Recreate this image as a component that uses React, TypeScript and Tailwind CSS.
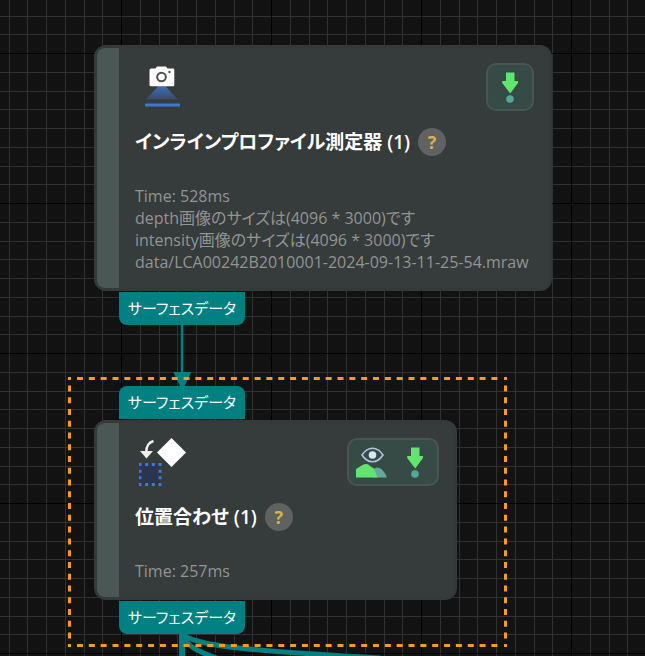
import type { ReactNode } from 'react'

const GRID_STEPS = [19, 38, 56, 75, 94, 113, 131]

function Grid() {
  return (
    <svg className="absolute inset-0 h-full w-full" shapeRendering="crispEdges" aria-hidden="true">
      <defs>
        <pattern id="grid" x="121" y="53" width="150" height="150" patternUnits="userSpaceOnUse">
          {GRID_STEPS.map((s) => (
            <g key={s} fill="#313131">
              <rect x={s} y="0" width="1" height="150" />
              <rect x="0" y={s} width="150" height="1" />
            </g>
          ))}
          <rect width="1" height="150" fill="#000" />
          <rect width="150" height="1" fill="#000" />
        </pattern>
      </defs>
      <rect width="100%" height="100%" fill="url(#grid)" />
    </svg>
  )
}

function Edges() {
  return (
    <svg className="absolute inset-0 h-full w-full" fill="none" stroke="#008080" aria-hidden="true">
      <path d="M182 324V376" strokeWidth="2.5" />
      <path d="M174 372.5H190.5L184 386H180.5Z" fill="#008080" strokeLinejoin="round" strokeWidth="1" />
      <path d="M182 634V660" strokeWidth="6" />
      <path d="M182 634C196 646 240 650 380 658" strokeWidth="5" />
      <path d="M182 634C186 646 198 652 222 660" strokeWidth="5" />
    </svg>
  )
}

function Selection() {
  return (
    <svg className="pointer-events-none absolute inset-0 h-full w-full" stroke="#f99b1c" strokeWidth="3" aria-hidden="true">
      <path d="M77 378.5H498M77 645.5H498" strokeDasharray="6 5.84" />
      <path d="M69.5 385.5V639M505.5 385.5V639" strokeDasharray="6 5.76" />
      <path d="M68 378.5h3M504 378.5h3M68 645.5h3M504 645.5h3" />
    </svg>
  )
}

function CameraIcon() {
  return (
    <svg width="36" height="44" viewBox="0 -3 36 44" aria-hidden="true">
      <defs>
        <linearGradient id="beam" x1="0" y1="0" x2="0" y2="1">
          <stop offset="0" stopColor="#3f6db8" />
          <stop offset="1" stopColor="#3a4a66" />
        </linearGradient>
      </defs>
      <path d="M13.5 20h7l12 13.5H1Z" fill="url(#beam)" />
      <path d="M6 2.5h4.500L12 .5h9l1.5 2H28a1.3 1.3 0 0 1 1.3 1.3V19a1.3 1.3 0 0 1-1.3 1.3H5.800A1.3 1.3 0 0 1 4.500 19V3.500Z" fill="#fff" />
      <circle cx="16.500" cy="11" r="4.3" fill="none" stroke="#4a4f4f" strokeWidth="2" />
      <circle cx="24.500" cy="6" r="1.2" fill="#4a4f4f" />
      <rect x="0" y="37.5" width="35" height="3" rx="1" fill="#3f78dc" />
    </svg>
  )
}

function AlignIcon() {
  return (
    <svg width="48" height="50" viewBox="4 0 48 50" aria-hidden="true">
      <path d="M36.5 0 51 14.5 36.5 29 22 14.5Z" fill="#fff" />
      <path d="M18.5 3C13 5 11.3 8 11.3 14" fill="none" stroke="#eee" strokeWidth="2.5" />
      <path d="M5 13h13L11.5 20.5Z" fill="#eee" />
      <rect
        x="5"
        y="26.5"
        width="20"
        height="20"
        fill="#2b3550"
        stroke="#4377dd"
        strokeWidth="3"
        strokeDasharray="3 3.667"
        strokeDashoffset="1.5"
      />
    </svg>
  )
}

function ArrowIcon() {
  return (
    <svg width="16" height="31" viewBox="0 0 16 31" aria-hidden="true">
      <path d="M4 .5h8.5V9h3.5v2L8.2 21.5.2 11V9H4Z" fill="#62e56e" />
      <circle cx="8" cy="27" r="3.8" fill="#52a997" />
    </svg>
  )
}

function ViewIcon() {
  return (
    <svg width="31" height="31" viewBox="0 0 31 31" aria-hidden="true">
      <path d="M17 22l4-1.5c4 0 7.5 4 10 10H17Z" fill="#62ab98" />
      <path d="M0 30.5V22l6.5-4L9 17l3 .3 4 3.2 1.5.5 4 9.5Z" fill="#62e56e" />
      <path d="M6 8c6-9 15-9 21 0-6 9-15 9-21 0Z" fill="none" stroke="#afc7dc" strokeWidth="1.6" />
      <circle cx="16.5" cy="8" r="3.8" fill="#d3e7fb" />
    </svg>
  )
}

function ToolButton({ label, children }: { label: string; children: ReactNode }) {
  return (
    <button type="button" aria-label={label} className="flex w-8 justify-center">
      {children}
    </button>
  )
}

function Port({ side }: { side: 'in' | 'out' }) {
  return (
    <div
      className={`ml-[25px] flex h-[33px] w-[126px] items-center justify-center bg-[#008080] text-[15px] text-white ${
        side === 'in' ? 'mb-px rounded-t-lg' : 'mt-px rounded-b-lg'
      }`}
    >
      サーフェスデータ
    </div>
  )
}

type NodeProps = {
  title: string
  icon: ReactNode
  tools: ReactNode
  children: ReactNode
}

function NodeCard({ title, icon, tools, children }: NodeProps) {
  return (
    <article className="flex rounded-xl border-3 border-[#343939] bg-[#363b3b]">
      <div className="w-[22px] shrink-0 rounded-l-lg bg-[#4a5755]" />
      <div className="grow py-[15px] pr-[15px] pl-4">
        <div className="flex h-14 items-start justify-between">
          <div className="flex w-14 justify-center">{icon}</div>
          <div className="flex h-12 items-center gap-3 rounded-[10px] border-2 border-[#485653] bg-[#364a46] px-1.5">
            {tools}
          </div>
        </div>
        <div className="mt-[9px] flex items-center gap-2">
          <h2 className="text-[19px] leading-7 font-semibold text-white">{title}</h2>
          <button
            type="button"
            aria-label="ヘルプ"
            className="flex size-7 items-center justify-center rounded-full bg-[#5f6261] text-lg font-bold text-[#d9b24e]"
          >
            ?
          </button>
        </div>
        <div className="mt-[29px] text-base leading-[22px] text-[#929595]">{children}</div>
      </div>
    </article>
  )
}

export default function App() {
  return (
    <main className="relative min-h-screen overflow-hidden bg-[#121212] font-['Open_Sans','Noto_Sans_CJK_JP',sans-serif] [font-feature-settings:'palt']">
      <Grid />
      <Edges />
      <section className="absolute top-[45px] left-[94px] w-[458px]">
        <NodeCard
          title="インラインプロファイル測定器 (1)"
          icon={<CameraIcon />}
          tools={<ToolButton label="実行"><ArrowIcon /></ToolButton>}
        >
          <p>Time: 528ms</p>
          <p>depth画像のサイズは(4096 * 3000)です</p>
          <p>intensity画像のサイズは(4096 * 3000)です</p>
          <p>data/LCA00242B2010001-2024-09-13-11-25-54.mraw</p>
        </NodeCard>
        <Port side="out" />
      </section>
      <section className="absolute top-[386px] left-[94px] w-[363px]">
        <Port side="in" />
        <NodeCard
          title="位置合わせ (1)"
          icon={<AlignIcon />}
          tools={
            <>
              <ToolButton label="表示"><ViewIcon /></ToolButton>
              <ToolButton label="実行"><ArrowIcon /></ToolButton>
            </>
          }
        >
          <p>Time: 257ms</p>
        </NodeCard>
        <Port side="out" />
      </section>
      <Selection />
    </main>
  )
}
